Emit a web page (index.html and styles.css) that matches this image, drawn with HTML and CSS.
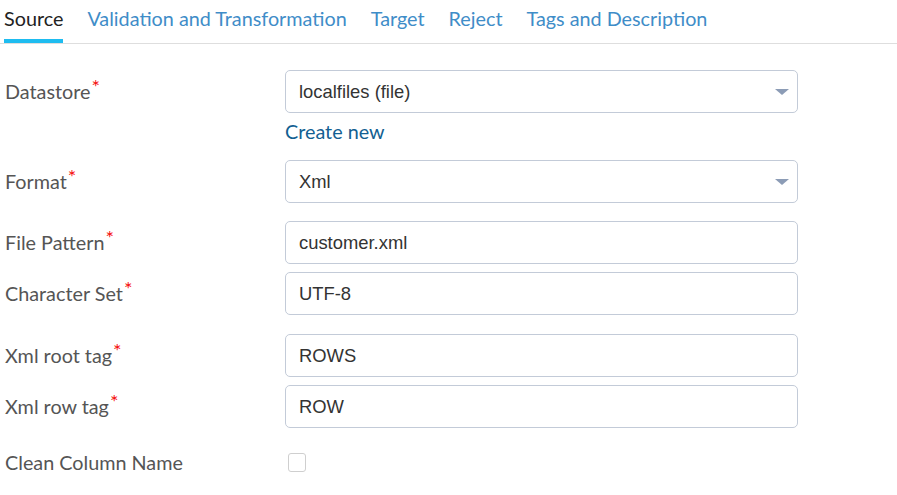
FILE: index.html
```html
<!DOCTYPE html>
<html>
<head>
<meta charset="utf-8">
<link rel="stylesheet" href="styles.css">
</head>
<body>
<nav class="tabs">
  <a class="tab active">Source</a>
  <a class="tab">Validation and Transformation</a>
  <a class="tab">Target</a>
  <a class="tab">Reject</a>
  <a class="tab">Tags and Description</a>
</nav>
<form class="form">
  <div class="row">
    <label class="label">Datastore<span class="req">*</span></label>
    <div class="field">
      <div class="select"><span>localfiles (file)</span><span class="caret"></span></div>
      <a class="link">Create new</a>
    </div>
  </div>
  <div class="row gap-lg">
    <label class="label">Format<span class="req">*</span></label>
    <div class="field">
      <div class="select"><span>Xml</span><span class="caret"></span></div>
    </div>
  </div>
  <div class="row gap-lg">
    <label class="label">File Pattern<span class="req">*</span></label>
    <div class="field"><div class="input">customer.xml</div></div>
  </div>
  <div class="row gap-sm">
    <label class="label">Character Set<span class="req">*</span></label>
    <div class="field"><div class="input">UTF-8</div></div>
  </div>
  <div class="row gap-xl">
    <label class="label">Xml root tag<span class="req">*</span></label>
    <div class="field"><div class="input">ROWS</div></div>
  </div>
  <div class="row gap-sm">
    <label class="label">Xml row tag<span class="req">*</span></label>
    <div class="field"><div class="input">ROW</div></div>
  </div>
  <div class="row gap-check">
    <label class="label">Clean Column Name</label>
    <div class="field"><span class="checkbox"></span></div>
  </div>
</form>
</body>
</html>
```
FILE: styles.css
```css
html, body {
  margin: 0;
  padding: 0;
  background: #fff;
}
body {
  font-family: Lato, "Liberation Sans", sans-serif;
  width: 897px;
  overflow: hidden;
}
.tabs {
  display: flex;
  gap: 24px;
  padding-left: 4px;
  border-bottom: 1px solid #dedede;
  height: 43px;
}
.tab {
  display: block;
  box-sizing: border-box;
  height: 43px;
  padding-top: 6px;
  font-size: 19.8px;
  line-height: 24px;
  color: #3f8dc8;
  border-bottom: 4px solid transparent;
}
.tab.active {
  color: #222;
  border-bottom-color: #1ebcf0;
}
.form {
  padding: 26px 0 0 5px;
}
.row {
  display: flex;
  align-items: flex-start;
}
.gap-lg { margin-top: 18px; }
.gap-xl { margin-top: 19px; }
.gap-sm { margin-top: 8px; }
.gap-check { margin-top: 25px; }
.label {
  width: 280px;
  flex: none;
  font-size: 19.8px;
  color: #555;
  line-height: 24px;
  padding-top: 9px;
}
.gap-check .label { padding-top: 0; margin-top: -3px; }
.req {
  color: #f50f0f;
  font-size: 20px;
  line-height: 0;
  vertical-align: 5px;
  margin-left: 1px;
}
.field {
  width: 513px;
  display: flex;
  flex-direction: column;
}
.select, .input {
  box-sizing: border-box;
  height: 43px;
  border: 1px solid #c3cbd8;
  border-radius: 5px;
  padding: 0 13px;
  display: flex;
  align-items: center;
  justify-content: space-between;
  font-family: "Liberation Sans", Arial, sans-serif;
  font-size: 18.4px;
  color: #333;
}
.caret {
  width: 0;
  height: 0;
  border-left: 7px solid transparent;
  border-right: 7px solid transparent;
  border-top: 6px solid #8c9cb6;
  margin-right: -5px;
}
.link {
  display: block;
  font-size: 19.8px;
  line-height: 24px;
  color: #135f92;
  margin-top: 6px;
  margin-bottom: -1px;
}
.checkbox {
  display: block;
  width: 16px;
  height: 17px;
  border: 1px solid #cfcfcf;
  border-radius: 3px;
  margin-left: 3px;
}
```
